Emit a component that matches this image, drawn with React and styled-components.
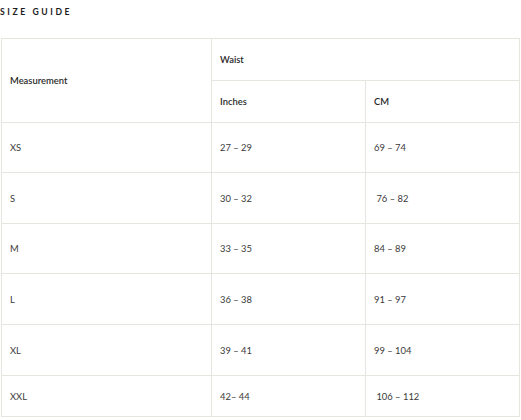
import React from "react";
import styled, { createGlobalStyle } from "styled-components";

const GlobalStyle = createGlobalStyle`
  html, body {
    margin: 0;
    padding: 0;
    background: #fff;
  }
  body {
    font-family: Lato, "Liberation Sans", sans-serif;
    color: #333;
  }
`;

const Page = styled.div`
  width: 521px;
  padding: 7px 0 0 1px;
  box-sizing: border-box;
`;

const Title = styled.h3`
  margin: 0 0 20px -1px;
  font-size: 8.6px;
  line-height: 11px;
  font-weight: 700;
  letter-spacing: 2.6px;
  text-transform: uppercase;
  color: #1c1c1c;
`;

const Table = styled.table`
  border-collapse: collapse;
  width: 518px;
  table-layout: fixed;
  font-size: 9.4px;
`;

const Cell = styled.td`
  border: 1px solid #e6e6e1;
  padding: 0 0 0 8px;
  height: ${(p) => p.$h}px;
  font-weight: ${(p) => (p.$head ? 600 : 400)};
  color: ${(p) => (p.$head ? "#2a2a2a" : "#3a3a3a")};
  text-align: left;
  vertical-align: middle;
  box-sizing: border-box;
  white-space: pre;
`;

const rows = [
  ["XS", "27 – 29", "69 – 74"],
  ["S", "30 – 32", " 76 – 82"],
  ["M", "33 – 35", "84 – 89"],
  ["L", "36 – 38", "91 – 97"],
  ["XL", "39 – 41", "99 – 104"],
  ["XXL", "42– 44", " 106 – 112"],
];

const heights = [50, 51, 50, 51, 51, 41];

export default function App() {
  return (
    <Page>
      <GlobalStyle />
      <Title>Size Guide</Title>
      <Table>
        <colgroup>
          <col style={{ width: 210 }} />
          <col style={{ width: 154 }} />
          <col style={{ width: 154 }} />
        </colgroup>
        <tbody>
          <tr>
            <Cell as="th" rowSpan={2} $head $h={42}>
              Measurement
            </Cell>
            <Cell as="th" colSpan={2} $head $h={42}>
              Waist
            </Cell>
          </tr>
          <tr>
            <Cell as="th" $head $h={42}>
              Inches
            </Cell>
            <Cell as="th" $head $h={42}>
              CM
            </Cell>
          </tr>
          {rows.map((r, i) => (
            <tr key={r[0]}>
              {r.map((v, j) => (
                <Cell key={j} $h={heights[i]}>
                  {v}
                </Cell>
              ))}
            </tr>
          ))}
        </tbody>
      </Table>
    </Page>
  );
}
